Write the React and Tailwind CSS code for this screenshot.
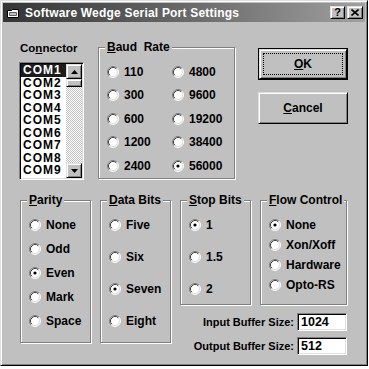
import React from "react";

const raised =
  "bg-[#c0c0c0] border border-t-[#dfdfdf] border-l-[#dfdfdf] border-b-black border-r-black shadow-[inset_1px_1px_#fff,inset_-1px_-1px_#808080]";
const sunken =
  "bg-white border border-t-[#808080] border-l-[#808080] border-b-white border-r-white shadow-[inset_1px_1px_#000,inset_-1px_-1px_#dfdfdf]";

function Radio({ checked }) {
  return (
    <svg width="12" height="12" viewBox="0 0 12 12" className="shrink-0">
      <circle cx="6" cy="6" r="5" fill="#fff" />
      <path d="M2.11 9.89A5.5 5.5 0 0 1 9.89 2.11" fill="none" stroke="#808080" />
      <path d="M9.89 2.11A5.5 5.5 0 0 1 2.11 9.89" fill="none" stroke="#fff" />
      <path d="M2.82 9.18A4.5 4.5 0 0 1 9.18 2.82" fill="none" stroke="#404040" />
      <path d="M9.18 2.82A4.5 4.5 0 0 1 2.82 9.18" fill="none" stroke="#dfdfdf" />
      {checked && <circle cx="6" cy="6" r="1.6" fill="#000" />}
    </svg>
  );
}

function Option({ label, checked, className }) {
  return (
    <div className={`flex items-center gap-[5px] ${className}`}>
      <Radio checked={checked} />
      <span className="text-[12px] font-bold leading-none whitespace-nowrap">{label}</span>
    </div>
  );
}

function Group({ label, className, children }) {
  return (
    <div className={`relative shrink-0 border border-[#808080] shadow-[1px_1px_0_#fff,inset_1px_1px_0_#fff] ${className}`}>
      <span className="absolute left-[6px] -top-[8px] bg-[#c0c0c0] px-[2px] text-[12px] font-bold leading-[15px] whitespace-pre">
        {label}
      </span>
      {children}
    </div>
  );
}

function Arrow({ up }) {
  return (
    <svg width="7" height="4" viewBox="0 0 7 4">
      <path d={up ? "M3.5 0L7 4H0z" : "M0 0h7L3.5 4z"} fill="#000" />
    </svg>
  );
}

const ports = ["COM1", "COM2", "COM3", "COM4", "COM5", "COM6", "COM7", "COM8", "COM9"];

export default function App() {
  return (
    <div className="w-[369px] h-[369px] bg-white font-['Liberation_Sans',Arial,sans-serif] text-black">
      <div className={`w-[368px] h-[366px] p-[2px] flex flex-col ${raised}`}>
        {/* title bar */}
        <div className="h-[19px] shrink-0 flex items-center bg-linear-to-r from-[#353535] to-[#a0a0a0] pl-[3px] pr-[2px]">
          <svg width="14" height="12" viewBox="0 0 14 12" className="shrink-0">
            <path d="M1.5 3.5h4l1-1h6v8h-11z" fill="#fff" stroke="#000" />
            <path d="M3.5 5.5h7v3h-7z" fill="#c0c0c0" stroke="#606060" />
          </svg>
          <span className="ml-[5px] text-[12px] font-bold text-white leading-none whitespace-nowrap tracking-[0.2px]">
            Software Wedge Serial Port Settings
          </span>
          <div className="ml-auto flex gap-[2px]">
            <div className={`w-[15px] h-[13px] flex items-center justify-center text-[11px] font-bold leading-none ${raised}`}>
              ?
            </div>
            <div className={`w-[16px] h-[13px] flex items-center justify-center ${raised}`}>
              <svg width="8" height="7" viewBox="0 0 8 7">
                <path d="M0.5 0.5L7.5 6.5M7.5 0.5L0.5 6.5" stroke="#000" strokeWidth="1.6" />
              </svg>
            </div>
          </div>
        </div>

        {/* top row */}
        <div className="flex items-start mt-[18px]">
          <div className="ml-[16px] w-[65px] shrink-0">
            <div className="h-[16px] text-[11.5px] font-bold leading-[16px] pl-[1px]">
              Co<span className="underline">n</span>nector
            </div>
            <div className={`mt-[6px] h-[118px] flex p-[1px] ${sunken}`}>
              <div className="flex-1">
                {ports.map((p, i) => (
                  <div
                    key={p}
                    className={`h-[12.5px] pl-[2px] text-[12px] font-bold leading-[12.5px] tracking-[1px] ${
                      i === 0 ? "bg-[#1c1c1c] text-white" : ""
                    }`}
                  >
                    {p}
                  </div>
                ))}
              </div>
              <div className="w-[16px] flex flex-col">
                <div className={`h-[15px] flex items-center justify-center ${raised}`}>
                  <Arrow up />
                </div>
                <div className={`h-[8px] ${raised}`} />
                <div className="flex-1 bg-[image:repeating-conic-gradient(#c0c0c0_0%_25%,#ffffff_0%_50%)] bg-[length:2px_2px]" />
                <div className={`h-[15px] flex items-center justify-center ${raised}`}>
                  <Arrow />
                </div>
              </div>
            </div>
          </div>

          <Group
            label={<><span className="underline">B</span>{"aud\u00a0 Rate"}</>}
            className="ml-[14px] mt-[7px] w-[137px] h-[132px] pt-[12px] pl-[8px]"
          >
            <div className="grid grid-cols-[65px_60px]">
              {[
                ["110", "4800"],
                ["300", "9600"],
                ["600", "19200"],
                ["1200", "38400"],
                ["2400", "56000"],
              ].map(([a, b]) => (
                <React.Fragment key={a}>
                  <Option label={a} className="h-[23.5px]" />
                  <Option label={b} checked={b === "56000"} className="h-[23.5px]" />
                </React.Fragment>
              ))}
            </div>
          </Group>

          <div className="ml-[23px] mt-[8px] w-[90px] shrink-0">
            <div className="h-[32px] border border-black">
              <div className={`h-full flex items-center justify-center p-[3px] ${raised}`}>
                <div className="w-full h-full border border-dotted border-black flex items-center justify-center text-[12px] font-bold leading-none">
                  <span className="underline">O</span>K
                </div>
              </div>
            </div>
            <div className={`mt-[12px] h-[32px] flex items-center justify-center text-[12px] font-bold leading-none ${raised}`}>
              <span>
                <span className="underline">C</span>ancel
              </span>
            </div>
          </div>
        </div>

        {/* bottom row */}
        <div className="flex items-start mt-[20px]">
          <Group
            label={<><span className="underline">P</span>arity</>}
            className="ml-[17px] w-[71px] h-[143px] pt-[12px] pl-[8px]"
          >
            {["None", "Odd", "Even", "Mark", "Space"].map((o) => (
              <Option key={o} label={o} checked={o === "Even"} className="h-[24px]" />
            ))}
          </Group>

          <Group
            label={<><span className="underline">D</span>ata Bits</>}
            className="ml-[9px] w-[71px] h-[143px] pt-[8px] pl-[8px]"
          >
            {["Five", "Six", "Seven", "Eight"].map((o) => (
              <Option key={o} label={o} checked={o === "Seven"} className="h-[32px]" />
            ))}
          </Group>

          <div className="ml-[9px] w-[167px] shrink-0">
            <div className="flex items-start">
              <Group
                label={<><span className="underline">S</span>top Bits</>}
                className="w-[71px] h-[105px] pt-[8px] pl-[8px]"
              >
                {["1", "1.5", "2"].map((o) => (
                  <Option key={o} label={o} checked={o === "1"} className="h-[32px]" />
                ))}
              </Group>
              <Group
                label={<><span className="underline">F</span>low Control</>}
                className="ml-[9px] w-[87px] h-[105px] pt-[14px] pl-[8px]"
              >
                {["None", "Xon/Xoff", "Hardware", "Opto-RS"].map((o) => (
                  <Option key={o} label={o} checked={o === "None"} className="h-[20px]" />
                ))}
              </Group>
            </div>

            <div className="mt-[8px] h-[18px] flex items-center justify-end gap-[3px]">
              <span className="text-[11px] font-bold leading-none whitespace-nowrap">Input Buffer Size:</span>
              <div className={`w-[50px] h-[18px] pl-[3px] text-[12.5px] font-bold leading-[16px] ${sunken}`}>1024</div>
            </div>
            <div className="mt-[6px] h-[18px] flex items-center justify-end gap-[3px]">
              <span className="text-[11px] font-bold leading-none whitespace-nowrap">Output Buffer Size:</span>
              <div className={`w-[50px] h-[18px] pl-[3px] text-[12.5px] font-bold leading-[16px] ${sunken}`}>512</div>
            </div>
          </div>
        </div>
      </div>
    </div>
  );
}
